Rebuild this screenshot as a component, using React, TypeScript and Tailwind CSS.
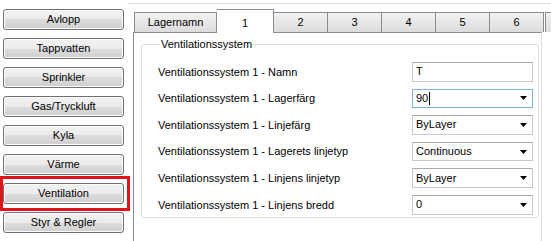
import React from "react";

const systems = [
  "Avlopp",
  "Tappvatten",
  "Sprinkler",
  "Gas/Tryckluft",
  "Kyla",
  "Värme",
  "Ventilation",
  "Styr & Regler",
];

const tabs = ["2", "3", "4", "5", "6"];

type Field = { label: string; value: string; combo: boolean; focused?: boolean };

const fields: Field[] = [
  { label: "Ventilationssystem 1 - Namn", value: "T", combo: false },
  { label: "Ventilationssystem 1 - Lagerfärg", value: "90", combo: true, focused: true },
  { label: "Ventilationssystem 1 - Linjefärg", value: "ByLayer", combo: true },
  { label: "Ventilationssystem 1 - Lagerets linjetyp", value: "Continuous", combo: true },
  { label: "Ventilationssystem 1 - Linjens linjetyp", value: "ByLayer", combo: true },
  { label: "Ventilationssystem 1 - Linjens bredd", value: "0", combo: true },
];

function SystemButton({ label }: { label: string }) {
  return (
    <button className="w-[121px] h-[21px] rounded-[3px] border border-[#707070] bg-[linear-gradient(to_bottom,#f2f2f2_0%,#ebebeb_50%,#dddddd_50%,#cfcfcf_100%)] shadow-[inset_0_0_0_1px_#fcfcfc] text-[11px] text-black leading-none">
      {label}
    </button>
  );
}

function DropArrow() {
  return (
    <svg width="7" height="4" viewBox="0 0 7 4" className="shrink-0">
      <polygon points="0,0 7,0 3.5,4" fill="#000" />
    </svg>
  );
}

function FieldBox({ field }: { field: Field }) {
  return (
    <div
      className={`w-[121px] h-[19.6px] flex items-center pl-[3px] pr-[5px] bg-white border ${
        field.focused ? "border-[#7eb4ea]" : "border-[#c5cad1] border-t-[#abadb3]"
      }`}
    >
      <span className="flex-1 text-[11px] leading-none text-black flex items-center">
        {field.value}
        {field.focused && <span className="inline-block w-px h-[13px] bg-black ml-px" />}
      </span>
      {field.combo && <DropArrow />}
    </div>
  );
}

export default function App() {
  return (
    <div className="w-[551px] h-[241px] bg-white flex overflow-hidden font-['Liberation_Sans',Arial,sans-serif] relative">
      {/* left system list */}
      <aside className="w-[128px] shrink-0 pt-[9px] pl-[3px] flex flex-col gap-[8px]">
        {systems.map((s) => (
          <SystemButton key={s} label={s} />
        ))}
      </aside>

      {/* annotation box */}
      <div className="absolute left-0 top-[176px] w-[130px] h-[35px] border-[3px] border-[#e1141b] pointer-events-none" />

      <div className="flex-1 flex flex-col mt-[3px] border-t border-[#e3e3e3]">
        {/* tab strip */}
        <div className="h-[28px] flex items-end pl-[6px] relative z-10">
          <div className="w-[83px] h-[20px] flex items-center justify-center border border-b-0 border-[#898c95] bg-[linear-gradient(to_bottom,#f2f2f2,#dcdcdc)] text-[11px]">
            Lagernamn
          </div>
          <div className="w-[57px] h-[24px] -mb-px flex items-start pt-[5px] justify-center border border-b-0 border-l-0 border-[#898c95] bg-white text-[11px]">
            1
          </div>
          {tabs.map((t) => (
            <div
              key={t}
              className="w-[54px] shrink-0 h-[20px] flex items-center justify-center border border-b-0 border-l-0 border-[#898c95] bg-[linear-gradient(to_bottom,#f2f2f2,#dcdcdc)] text-[11px]"
            >
              {t}
            </div>
          ))}
          <div className="w-[54px] shrink-0 h-[20px] ml-[1px] border border-b-0 border-[#898c95] bg-[linear-gradient(to_bottom,#f2f2f2,#dcdcdc)]" />
        </div>

        {/* tab page */}
        <div className="flex-1 ml-[5px] w-[409px] border-l border-t border-[#898c95] border-r border-r-[#e2e2e2] bg-white pl-[7px] pt-[11px]">
          <fieldset className="w-[398px] h-[180px] border border-[#d5dfe5] rounded-[3px] px-[16px] pr-[5px] -mt-[6px] pt-[11px]">
            <legend className="ml-[2px] px-[1px] text-[11px] text-black leading-[13px]">Ventilationssystem</legend>
            <div className="flex flex-col gap-[7px]">
              {fields.map((f) => (
                <div key={f.label} className="flex items-center justify-between">
                  <span className="text-[11px] text-black">{f.label}</span>
                  <FieldBox field={f} />
                </div>
              ))}
            </div>
          </fieldset>
        </div>
      </div>
    </div>
  );
}
